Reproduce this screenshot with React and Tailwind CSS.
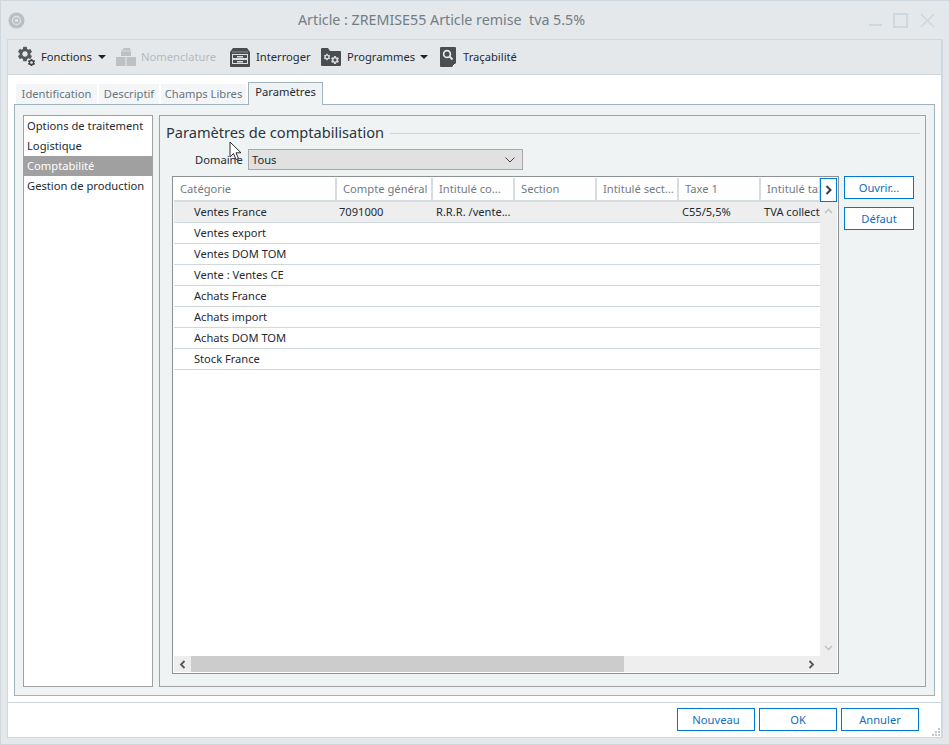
import React from "react";
import { MdSettings } from "react-icons/md";

const rows = [
  { name: "Ventes France", compte: "7091000", intitule: "R.R.R. /vente...", taxe: "C55/5,5%", tva: "TVA collect" },
  { name: "Ventes export" },
  { name: "Ventes DOM TOM" },
  { name: "Vente : Ventes CE" },
  { name: "Achats France" },
  { name: "Achats import" },
  { name: "Achats DOM TOM" },
  { name: "Stock France" },
];

const columns = [
  { label: "Catégorie", width: "w-[163px]" },
  { label: "Compte général", width: "w-[96px]" },
  { label: "Intitulé co...", width: "w-[82px]" },
  { label: "Section", width: "w-[82px]" },
  { label: "Intitulé sect...", width: "w-[82px]" },
  { label: "Taxe 1", width: "w-[82px]" },
  { label: "Intitulé taxe", width: "w-[60px]" },
];

function Caret() {
  return <span className="ml-[5px] w-0 h-0 border-x-[4px] border-x-transparent border-t-[4px] border-t-[#222]" />;
}

function GearsIcon() {
  return (
    <span className="relative block w-[24px] h-[24px] text-[#55595b]">
      <MdSettings size={18} className="absolute left-0 top-0" />
      <MdSettings size={9} className="absolute left-[11px] top-[13px] text-[#3f4345]" />
    </span>
  );
}

function BoxesIcon() {
  return (
    <svg width="20" height="20" viewBox="0 0 20 20" fill="#bdc1c3" className="block">
      <path d="M5 4l3-3h6l1 3v5H5z" />
      <path d="M5 4h10" stroke="#d6d9db" strokeWidth="1" />
      <rect x="0" y="10" width="9.5" height="9" />
      <rect x="10.5" y="10" width="9.5" height="9" />
    </svg>
  );
}

function DrawerIcon() {
  return (
    <svg width="20" height="19" viewBox="0 0 20 19" className="block">
      <path d="M3 0h14l3 4v14a1 1 0 0 1-1 1H1a1 1 0 0 1-1-1V4z" fill="#4a4d4f" />
      <path d="M2 4h16" stroke="#8a8d8f" strokeWidth="1" />
      <rect x="2.5" y="6.5" width="15" height="4" fill="none" stroke="#dcdfe0" />
      <rect x="2.5" y="11.5" width="15" height="4" fill="none" stroke="#dcdfe0" />
      <rect x="7" y="8" width="6" height="1.5" fill="#dcdfe0" />
      <rect x="7" y="13" width="6" height="1.5" fill="#dcdfe0" />
    </svg>
  );
}

function FolderGearsIcon() {
  return (
    <span className="relative block w-[20px] h-[18px]">
      <svg width="20" height="18" viewBox="0 0 20 18" className="absolute inset-0">
        <path d="M1 0h6l2 3h10a1 1 0 0 1 1 1v13a1 1 0 0 1-1 1H1a1 1 0 0 1-1-1V1a1 1 0 0 1 1-1z" fill="#4a4d4f" />
      </svg>
      <MdSettings size={8} className="absolute left-[2px] top-[5px] text-[#d8d8d8]" />
      <MdSettings size={10} className="absolute left-[9px] top-[7px] text-[#d8d8d8]" />
    </span>
  );
}

function TraceIcon() {
  return (
    <svg width="16" height="20" viewBox="0 0 16 20" className="block">
      <path d="M0 1a1 1 0 0 1 1-1h14a1 1 0 0 1 1 1v15l-4 4H1a1 1 0 0 1-1-1z" fill="#4b4e50" />
      <circle cx="7" cy="7" r="3.4" fill="none" stroke="#e8e8e8" strokeWidth="1.7" />
      <path d="M9.5 9.5l3 3" stroke="#e8e8e8" strokeWidth="2" />
      <path d="M15 17l-2 2" stroke="#f4f4f4" strokeWidth="1" />
    </svg>
  );
}

function BlueButton({ children, className }) {
  return (
    <button className={`h-[23px] border border-[#0078d4] bg-white text-[#0f6fc0] text-[11.2px] leading-none ${className}`}>
      {children}
    </button>
  );
}

function Tab({ children, className }) {
  return (
    <div className={`h-[20px] flex items-center justify-center pt-[1px] bg-[#f3f5f6] text-[#67767f] text-[11.2px] ${className}`}>
      {children}
    </div>
  );
}

export default function App() {
  return (
    <div
      className="relative w-[950px] h-[745px] overflow-hidden flex flex-col bg-[#e4e8eb] border border-[#cfd8de]"
      style={{ fontFamily: '"Noto Sans", "Open Sans", sans-serif' }}
    >
      {/* Title bar */}
      <div className="h-[38px] shrink-0 flex items-center pl-[7px] pr-[14px]">
        <svg width="17" height="17" viewBox="0 0 17 17" className="mt-[1px]">
          <circle cx="8.5" cy="8.5" r="8" fill="#b9bfc3" />
          <circle cx="8.5" cy="8.5" r="4" fill="none" stroke="#dfe3e5" strokeWidth="1.3" />
          <rect x="7" y="7" width="3" height="3" fill="#dfe3e5" />
        </svg>
        <div className="ml-[273px] text-[14.25px] text-[#727d84] whitespace-pre">Article : ZREMISE55 Article remise  tva 5.5%</div>
        <div className="ml-auto flex items-center gap-[11px] text-[#cfd8dc]">
          <span className="w-[13px] h-[2px] bg-[#cfd8dc] mt-[10px]" />
          <span className="w-[15px] h-[15px] border-2 border-[#cfd8dc]" />
          <svg width="15" height="15" viewBox="0 0 15 15" className="ml-[1px]">
            <path d="M1 1l13 13M14 1L1 14" stroke="#cfd8dc" strokeWidth="1.6" />
          </svg>
        </div>
      </div>

      {/* Main frame */}
      <div className="mx-[6px] flex-1 flex flex-col border border-[#cfd8de] border-r-2 mb-[6px] min-h-0">
        {/* Toolbar */}
        <div className="h-[35px] shrink-0 flex items-center pl-[8px] text-[11.2px] text-[#1f2a33] border-b border-[#cfd8de]">
          <GearsIcon />
          <span className="ml-[1px] w-[52px]">Fonctions</span>
          <Caret />
          <span className="ml-[10px]"><BoxesIcon /></span>
          <span className="ml-[5px] w-[76px] text-[#b4babd]">Nomenclature</span>
          <span className="ml-[13px]"><DrawerIcon /></span>
          <span className="ml-[6px] w-[53px]">Interroger</span>
          <span className="ml-[12px]"><FolderGearsIcon /></span>
          <span className="ml-[6px] w-[68px]">Programmes</span>
          <Caret />
          <span className="ml-[12px]"><TraceIcon /></span>
          <span className="ml-[7px]">Traçabilité</span>
        </div>

        {/* Content */}
        <div className="flex-1 flex flex-col min-h-0 bg-white">
          <div className="h-[29px] shrink-0 flex items-end pl-[8px] gap-[2px]">
            <Tab className="w-[81px]">Identification</Tab>
            <Tab className="w-[60px]">Descriptif</Tab>
            <Tab className="w-[85px]">Champs Libres</Tab>
            <div className="h-[23px] w-[75px] -mb-[1px] z-10 flex items-start pt-[1px] justify-center bg-[#f0f3f4] border border-b-0 border-[#9fb3bd] text-[11.2px] text-[#1f2a33]">
              Paramètres
            </div>
          </div>

          <div className="ml-[6px] mr-[6px] h-[592px] shrink-0 flex gap-[6px] bg-[#f0f3f4] border border-[#9fb3bd] pl-[8px] pr-[8px] pt-[10px] pb-[8px]">
            {/* Left list */}
            <div className="w-[130px] shrink-0 bg-white border border-[#a0a0a0] text-[11.2px] text-[#1f2a33]">
              <div className="h-[20px] pl-[3px] flex items-center">Options de traitement</div>
              <div className="h-[20px] pl-[3px] flex items-center">Logistique</div>
              <div className="h-[20px] pl-[3px] flex items-center bg-[#a0a0a0] text-white">Comptabilité</div>
              <div className="h-[20px] pl-[3px] flex items-center whitespace-nowrap">Gestion de production</div>
            </div>

            {/* Right group */}
            <div className="flex-1 min-w-0 border border-[#a0a0a0] pl-[12px] pr-[6px] pb-[12px] flex flex-col">
              <div className="h-[32px] shrink-0 flex items-center -mr-[1px] pt-[2px]">
                <span className="ml-[-6px] text-[14.6px] text-[#2a3640]">Paramètres de comptabilisation</span>
                <span className="flex-1 h-px bg-[#ccd4d8] ml-[6px]" />
              </div>
              <div className="h-[21px] mt-[1px] shrink-0 flex items-center text-[11.2px] text-[#1f2a33]">
                <span className="ml-[23px] w-[53px] pt-[1px]">Domaine</span>
                <div className="w-[275px] h-[21px] flex items-center justify-between bg-[#e1e1e1] border border-[#a8a8a8] pl-[3px] pr-[7px]">
                  <span className="pt-[1px]">Tous</span>
                  <svg width="10" height="6" viewBox="0 0 10 6">
                    <path d="M0.5 0.5L5 5l4.5-4.5" fill="none" stroke="#444" />
                  </svg>
                </div>
              </div>

              <div className="flex-1 min-h-0 mt-[6px] flex gap-[5px]">
                {/* Grid */}
                <div className="w-[667px] shrink-0 border border-[#8c9194] p-[1px] flex flex-col bg-white">
                  <div className="flex-1 min-h-0 flex">
                    <div className="flex-1 min-w-0 overflow-hidden flex flex-col">
                      <div className="h-[24px] shrink-0 flex border-b-2 border-[#d5dde1] text-[11.2px] text-[#707c84]">
                        {columns.map((c) => (
                          <div key={c.label} className={`${c.width} shrink-0 flex items-center pl-[6px] pt-[1px] border-r-2 border-[#d5dde1] whitespace-nowrap overflow-hidden`}>
                            {c.label}
                          </div>
                        ))}
                      </div>
                      {rows.map((r, i) => (
                        <div key={r.name} className={`h-[21px] shrink-0 flex items-center border-b border-[#cfd8dc] text-[11.1px] text-[#1f2a33] ${i === 0 ? "bg-[#eeeeee]" : ""}`}>
                          <div className="w-[163px] shrink-0 pl-[20px]">{r.name}</div>
                          <div className="w-[96px] shrink-0 pl-[2px]">{r.compte}</div>
                          <div className="w-[82px] shrink-0 pl-[3px] whitespace-nowrap">{r.intitule}</div>
                          <div className="w-[164px] shrink-0" />
                          <div className="w-[82px] shrink-0 pl-[3px]">{r.taxe}</div>
                          <div className="w-[60px] shrink-0 pl-[3px] whitespace-nowrap overflow-hidden">{r.tva}</div>
                        </div>
                      ))}
                    </div>
                    {/* Vertical scrollbar */}
                    <div className="w-[17px] shrink-0 flex flex-col bg-[#eeeeee]">
                      <div className="h-[24px] shrink-0 bg-white border border-[#0078d4] flex items-center justify-center">
                        <svg width="7" height="10" viewBox="0 0 7 10">
                          <path d="M1.5 1l4 4-4 4" fill="none" stroke="#3c4043" strokeWidth="2" />
                        </svg>
                      </div>
                      <div className="h-[17px] flex items-center justify-center">
                        <svg width="9" height="6" viewBox="0 0 9 6">
                          <path d="M1 5l3.5-3.5L8 5" fill="none" stroke="#c4c4c4" strokeWidth="1.6" />
                        </svg>
                      </div>
                      <div className="flex-1" />
                      <div className="h-[17px] flex items-center justify-center">
                        <svg width="9" height="6" viewBox="0 0 9 6">
                          <path d="M1 1l3.5 3.5L8 1" fill="none" stroke="#c4c4c4" strokeWidth="1.6" />
                        </svg>
                      </div>
                    </div>
                  </div>
                  {/* Horizontal scrollbar */}
                  <div className="h-[16px] shrink-0 flex bg-[#eeeeee]">
                    <div className="w-[17px] flex items-center justify-center">
                      <svg width="7" height="9" viewBox="0 0 7 9">
                        <path d="M5.5 1L2 4.5 5.5 8" fill="none" stroke="#555" strokeWidth="1.8" />
                      </svg>
                    </div>
                    <div className="w-[433px] bg-[#cccccc]" />
                    <div className="flex-1 flex items-center justify-end pr-[22px]">
                      <svg width="7" height="9" viewBox="0 0 7 9">
                        <path d="M1.5 1L5 4.5 1.5 8" fill="none" stroke="#555" strokeWidth="1.8" />
                      </svg>
                    </div>
                  </div>
                </div>

                <div className="flex flex-col gap-[8px]">
                  <BlueButton className="w-[70px]">Ouvrir...</BlueButton>
                  <BlueButton className="w-[70px]">Défaut</BlueButton>
                </div>
              </div>
            </div>
          </div>

          {/* Footer */}
          <div className="mt-[6px] flex-1 border-t border-[#cfd8de] flex items-start justify-end pt-[5px] pr-[22px] gap-[4px] relative">
            <BlueButton className="w-[78px]">Nouveau</BlueButton>
            <BlueButton className="w-[78px]">OK</BlueButton>
            <BlueButton className="w-[78px]">Annuler</BlueButton>
            <svg width="8" height="8" viewBox="0 0 8 8" className="absolute right-[1px] bottom-[1px]" fill="#c0c8cc">
              <rect x="6" y="0" width="2" height="2" />
              <rect x="3" y="3" width="2" height="2" />
              <rect x="6" y="3" width="2" height="2" />
              <rect x="0" y="6" width="2" height="2" />
              <rect x="3" y="6" width="2" height="2" />
              <rect x="6" y="6" width="2" height="2" />
            </svg>
          </div>
        </div>
      </div>

      {/* Mouse pointer */}
      <svg width="13" height="20" viewBox="0 0 13 20" className="absolute left-[228px] top-[140px]">
        <path d="M1 1v15l3.5-3.5 2.5 6 2.5-1-2.5-5.7H12z" fill="#fff" stroke="#2a2a2a" strokeWidth="1" />
      </svg>
    </div>
  );
}
